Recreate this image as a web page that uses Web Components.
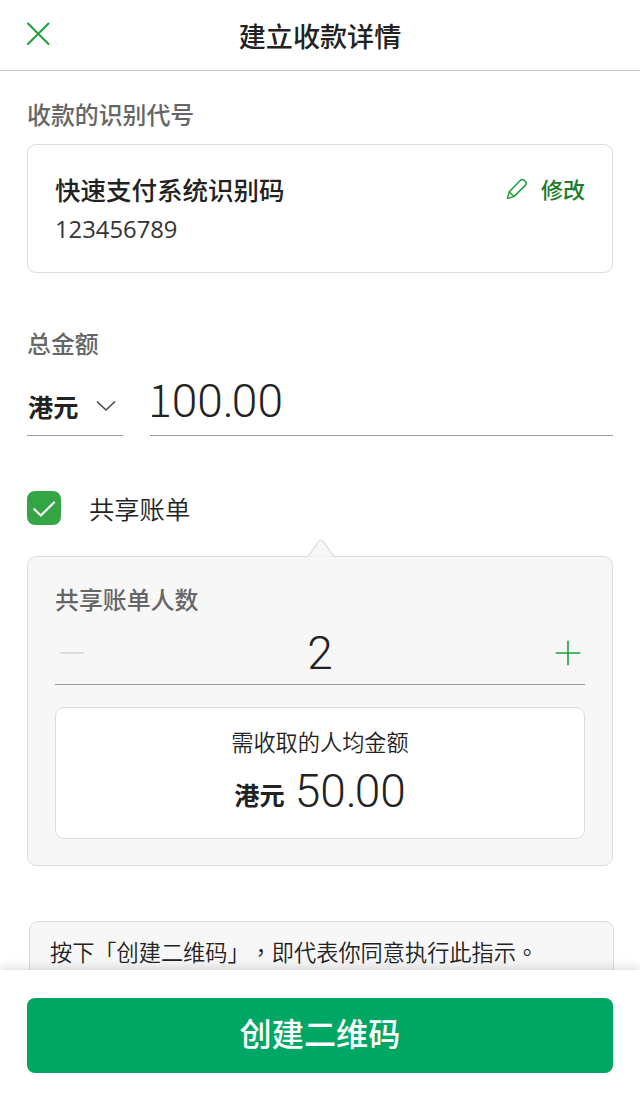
<!DOCTYPE html>
<html lang="zh-Hans">
<head>
<meta charset="utf-8">
<title>建立收款详情</title>
<style>
  body {
    margin: 0;
    background: #fff;
    color: #222;
    font-family: "Noto Sans CJK SC", sans-serif;
  }
</style>
</head>
<body>
<pay-screen>
  <pay-header slot="header">建立收款详情</pay-header>

  <field-label>收款的识别代号</field-label>
  <proxy-card name="快速支付系统识别码" action="修改">123456789</proxy-card>

  <field-label style="margin-top: 55px">总金额</field-label>
  <amount-field currency="港元" value="100.00"></amount-field>

  <check-option>共享账单</check-option>
  <share-panel>
    <field-label>共享账单人数</field-label>
    <count-stepper value="2"></count-stepper>
    <share-result currency="港元" value="50.00">需收取的人均金额</share-result>
  </share-panel>

  <terms-note>按下「创建二维码」，即代表你同意执行此指示。</terms-note>

  <pay-button slot="footer">创建二维码</pay-button>
</pay-screen>

<script>
class PayScreen extends HTMLElement {
  constructor() {
    super();
    this.root = this.attachShadow({ mode: 'open' });
    this.root.innerHTML = `
    <style>
      :host {
        display: flex;
        flex-direction: column;
        height: 1100px;
        width: 640px;
        overflow: hidden;
      }

      main {
        flex: 1;
        min-height: 0;
        overflow: hidden;
        padding: 28px 27px 0;
      }

      footer {
        position: relative;
        box-sizing: border-box;
        height: 130px;
        padding: 28px 27px 27px;
        background: #fff;
        box-shadow: 0 0 12px rgba(0, 0, 0, .2);
      }
    </style>
    <slot name="header"></slot>
    <main><slot></slot></main>
    <footer><slot name="footer"></slot></footer>
    `;
  }
}

class PayHeader extends HTMLElement {
  constructor() {
    super();
    this.root = this.attachShadow({ mode: 'open' });
    this.root.innerHTML = `
    <style>
      :host {
        display: grid;
        grid-template-columns: 60px 1fr 60px;
        align-items: center;
        height: 70px;
        flex: none;
        border-bottom: 1px solid #c8c8c8;
      }

      svg {
        display: block;
        margin: -2px 0 0 26px;
      }

      .title {
        padding-top: 1px;
        text-align: center;
        font-size: 27.1px;
        font-weight: 500;
        line-height: 41px;
      }
    </style>
    <svg width="24" height="24" viewBox="0 0 24 24" fill="none" stroke="#1da038" stroke-width="2" stroke-linecap="round">
      <path d="M2 1.5L22.5 22M22.5 1.5L2 22"/>
    </svg>
    <div class="title"><slot></slot></div>
    `;
  }
}

class FieldLabel extends HTMLElement {
  constructor() {
    super();
    this.root = this.attachShadow({ mode: 'open' });
    this.root.innerHTML = `
    <style>
      :host {
        display: block;
        color: #666;
        font-size: 23.9px;
        font-weight: 500;
        line-height: 30px;
      }
    </style>
    <slot></slot>
    `;
  }
}

class ProxyCard extends HTMLElement {
  constructor() {
    super();
    this.root = this.attachShadow({ mode: 'open' });
    this.root.innerHTML = `
    <style>
      :host {
        display: flex;
        justify-content: space-between;
        align-items: flex-start;
        box-sizing: border-box;
        height: 129px;
        margin-top: 15px;
        padding: 29px 27px 0;
        border: 1px solid #ddd;
        border-radius: 9px;
      }

      .name {
        font-size: 25.5px;
        font-weight: 500;
        line-height: 30px;
      }

      .number {
        margin-top: 10px;
        color: #333;
        font: 400 23.8px/30px "Open Sans", sans-serif;
      }

      .action {
        display: flex;
        align-items: center;
        gap: 13px;
        color: #1b7d28;
        font-size: 22px;
        font-weight: 500;
        line-height: 28px;
      }
    </style>
    <div>
      <div class="name"></div>
      <div class="number"><slot></slot></div>
    </div>
    <div class="action">
      <svg width="22" height="22" viewBox="0 0 22 22" fill="none" stroke="#1da038" stroke-width="1.5" stroke-linejoin="round">
        <path d="M1.4 21.4L3.3 14.8L14.2 3.6C15.4 2.4 17.2 2.4 18.5 3.6L19.2 4.3C20.4 5.5 20.4 7.2 19.2 8.4L7.9 19.6ZM3.3 14.8L7.9 19.6"/>
      </svg>
      <span></span>
    </div>
    `;
  }

  connectedCallback() {
    this.root.querySelector('.name').textContent = this.getAttribute('name');
    this.root.querySelector('.action span').textContent = this.getAttribute('action');
  }
}

// Thin figures. The "1" comes from the CJK face, which gives it a foot.
class MoneyValue extends HTMLElement {
  static get observedAttributes() {
    return ['value'];
  }

  constructor() {
    super();
    this.root = this.attachShadow({ mode: 'open' });
    this.root.innerHTML = `
    <style>
      :host {
        display: block;
        font: 300 46px/50px Roboto, sans-serif;
        white-space: nowrap;
      }

      .one {
        font-family: "Noto Sans CJK SC", sans-serif;
        font-size: 44.5px;
        line-height: 1px;
      }

      .dot {
        letter-spacing: -2px;
      }
    </style>
    <span class="figures"></span>
    `;
  }

  attributeChangedCallback(name, oldValue, value) {
    this.root.querySelector('.figures').innerHTML = value
      .replace('1', '<span class="one">1</span>')
      .replace('.', '<span class="dot">.</span>');
  }
}

class AmountField extends HTMLElement {
  constructor() {
    super();
    this.root = this.attachShadow({ mode: 'open' });
    this.root.innerHTML = `
    <style>
      :host {
        display: grid;
        grid-template-columns: 96px 1fr;
        column-gap: 27px;
        height: 78px;
      }

      .currency, .value {
        border-bottom: 1px solid #999;
      }

      .currency {
        display: flex;
        align-items: center;
        justify-content: space-between;
        padding: 18px 7px 0 1px;
        font-size: 25.2px;
        font-weight: 700;
        line-height: 30px;
      }

      .value {
        padding-top: 18px;
      }

      money-value {
        margin-left: -2px;
      }
    </style>
    <div class="currency">
      <span></span>
      <svg width="20" height="12" viewBox="0 0 20 12" fill="none" stroke="#444" stroke-width="1.5">
        <path d="M1 1.5L10 10L19 1.5"/>
      </svg>
    </div>
    <div class="value"><money-value></money-value></div>
    `;
    this.root.querySelector('money-value').setAttribute('value', this.getAttribute('value'));
    this.root.querySelector('.currency span').textContent = this.getAttribute('currency');
  }
}

class CheckOption extends HTMLElement {
  constructor() {
    super();
    this.root = this.attachShadow({ mode: 'open' });
    this.root.innerHTML = `
    <style>
      :host {
        display: flex;
        align-items: center;
        gap: 28px;
        height: 34px;
        margin-top: 55px;
        font-size: 25.3px;
        font-weight: 350;
        line-height: 34px;
      }

      .box {
        display: grid;
        place-items: center;
        width: 34px;
        height: 34px;
        border-radius: 8px;
        background: #34a545;
      }
    </style>
    <div class="box">
      <svg width="24" height="18" viewBox="0 0 24 18" fill="none" stroke="#fff" stroke-width="2.2" stroke-linecap="round" stroke-linejoin="round">
        <path d="M2.3 10.2L8.8 16.5L22 3.5"/>
      </svg>
    </div>
    <slot></slot>
    `;
  }
}

class SharePanel extends HTMLElement {
  constructor() {
    super();
    this.root = this.attachShadow({ mode: 'open' });
    this.root.innerHTML = `
    <style>
      :host {
        display: block;
        position: relative;
        box-sizing: border-box;
        height: 310px;
        margin-top: 31px;
        padding: 27px 27px 0;
        border: 1px solid #ddd;
        border-radius: 9px;
        background: #f7f7f7;
      }

      .pointer {
        position: absolute;
        left: 279px;
        top: -19px;
      }
    </style>
    <svg class="pointer" width="28" height="20" viewBox="0 0 28 20" fill="#f7f7f7" stroke="#ddd" stroke-width="1.2">
      <path d="M1 18.6L11.8 3.4Q14 .6 16.2 3.4L27 18.6" />
      <path d="M1.8 19.5H26.2" stroke="#f7f7f7" stroke-width="2"/>
    </svg>
    <slot></slot>
    `;
  }
}

class CountStepper extends HTMLElement {
  constructor() {
    super();
    this.root = this.attachShadow({ mode: 'open' });
    this.root.innerHTML = `
    <style>
      :host {
        display: flex;
        align-items: center;
        justify-content: space-between;
        box-sizing: border-box;
        height: 71px;
        padding: 7px 4px 0;
        border-bottom: 1px solid #999;
      }
    </style>
    <svg width="26" height="26" viewBox="0 0 26 26" stroke="#ddd" stroke-width="2"><path d="M.5 13H25"/></svg>
    <money-value></money-value>
    <svg width="26" height="26" viewBox="0 0 26 26" stroke="#1da038" stroke-width="1.6"><path d="M.7 13H25.3M13 .7V25.3"/></svg>
    `;
    this.root.querySelector('money-value').setAttribute('value', this.getAttribute('value'));
  }
}

class ShareResult extends HTMLElement {
  constructor() {
    super();
    this.root = this.attachShadow({ mode: 'open' });
    this.root.innerHTML = `
    <style>
      :host {
        display: block;
        box-sizing: border-box;
        height: 132px;
        margin-top: 22px;
        padding-top: 18px;
        border: 1px solid #ddd;
        border-radius: 9px;
        background: #fff;
        text-align: center;
        font-size: 22.2px;
        font-weight: 350;
        line-height: 30px;
      }

      .total {
        display: flex;
        justify-content: center;
        gap: 10px;
        margin-top: 10px;
      }

      .currency {
        padding-top: 13px;
        font-size: 25.2px;
        font-weight: 700;
      }
    </style>
    <slot></slot>
    <div class="total">
      <span class="currency"></span>
      <money-value></money-value>
    </div>
    `;
    this.root.querySelector('money-value').setAttribute('value', this.getAttribute('value'));
    this.root.querySelector('.currency').textContent = this.getAttribute('currency');
  }
}

class TermsNote extends HTMLElement {
  constructor() {
    super();
    this.root = this.attachShadow({ mode: 'open' });
    this.root.innerHTML = `
    <style>
      :host {
        display: block;
        height: 100px;
        margin: 55px -1px 0 2px;
        padding: 14px 0 0 20px;
        border: 1px solid #ddd;
        border-radius: 9px;
        background: #f7f7f7;
        font-family: "Noto Sans CJK TC", sans-serif;
        font-size: 22.2px;
        font-weight: 350;
        line-height: 30px;
        white-space: nowrap;
        text-spacing-trim: space-all;
      }
    </style>
    <slot></slot>
    `;
    this.lang = 'zh-Hant';
  }
}

class PayButton extends HTMLElement {
  constructor() {
    super();
    this.root = this.attachShadow({ mode: 'open' });
    this.root.innerHTML = `
    <style>
      :host {
        display: block;
        height: 75px;
        border-radius: 8px;
        background: #00a664;
        color: #fff;
        text-align: center;
        font-size: 32.2px;
        font-weight: 500;
        line-height: 69px;
      }
    </style>
    <slot></slot>
    `;
  }
}

customElements.define('money-value', MoneyValue);
customElements.define('pay-screen', PayScreen);
customElements.define('pay-header', PayHeader);
customElements.define('field-label', FieldLabel);
customElements.define('proxy-card', ProxyCard);
customElements.define('amount-field', AmountField);
customElements.define('check-option', CheckOption);
customElements.define('share-panel', SharePanel);
customElements.define('count-stepper', CountStepper);
customElements.define('share-result', ShareResult);
customElements.define('terms-note', TermsNote);
customElements.define('pay-button', PayButton);
</script>
</body>
</html>
